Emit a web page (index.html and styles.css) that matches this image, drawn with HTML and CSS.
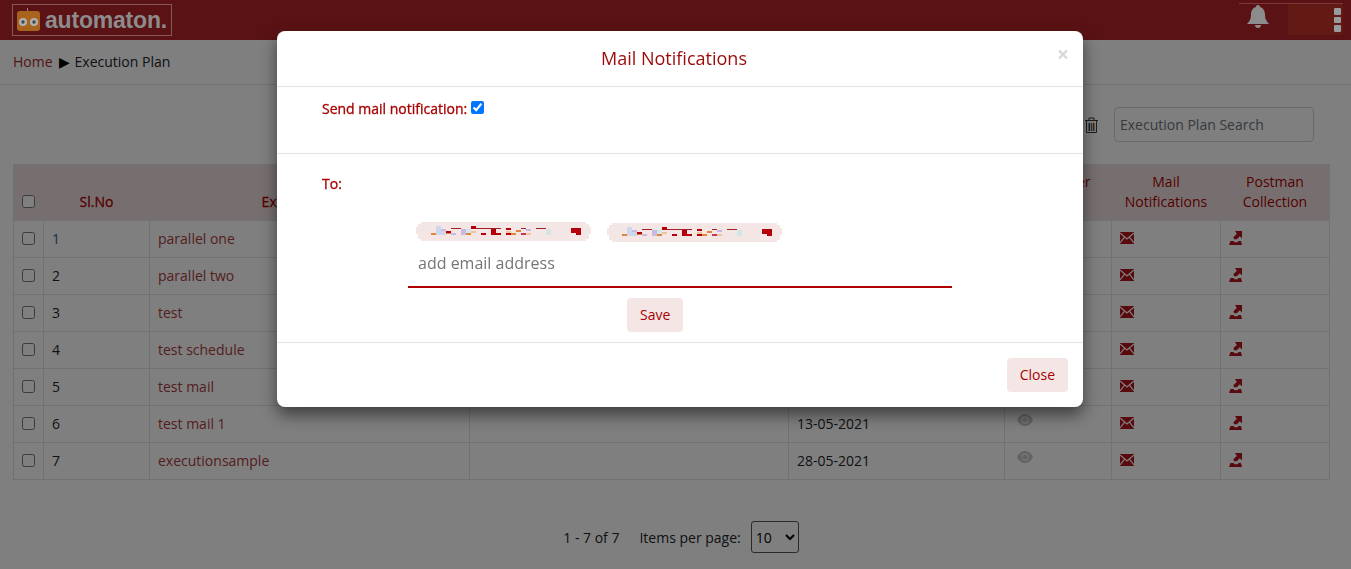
FILE: index.html
```html
<!DOCTYPE html>
<html lang="en">
<head>
  <meta charset="UTF-8" />
  <title>Execution Plan</title>
  <link rel="stylesheet" href="styles.css">
</head>
<body>
  <svg class="defs" width="0" height="0">
    <symbol id="mail" viewBox="0 0 14 12">
      <path fill="#b3141c" d="M0 0h14v12H0z"/>
      <path fill="none" stroke="#fff" stroke-width="1.200" d="M0 1l7 6 7-6M0 11l4.600-5.800M14 11L9.400 5.200"/>
    </symbol>
    <symbol id="export" viewBox="0 0 13 14">
      <path fill="#b3141c" d="M6 0h7v7.500L10.800 5.200 7.800 8.200 5 8.200 4.500 6 7.800 3zM1.500 10h3l1 1.200h3l1-1.200H12l1 4H0z"/>
    </symbol>
    <symbol id="eye" viewBox="0 0 16 12">
      <path fill="#c4c4c4" d="M8 0c3.500 0 6.300 2.500 8 6-1.700 3.500-4.500 6-8 6s-6.300-2.500-8-6c1.700-3.500 4.500-6 8-6z"/>
      <circle cx="8" cy="6" r="3.700" fill="#f4f4f4"/>
      <circle cx="8" cy="6" r="2.600" fill="#c4c4c4"/>
    </symbol>
    <symbol id="blur" viewBox="0 0 175 19">
      <path fill="#f5e6e6" d="M5 0h165v2h3v3h2v7h-2v5h-3v2H5v-2H2v-5H0V5h2V2h3z"/>
      <path fill="#cdd6ea" d="M20 4h5v9h-5zM25 8h5v5h-5z"/>
      <path fill="#e0853a" d="M15 11h5v2h-5zM30 10h5v2h-5zM50 11h5v2h-5zM100 8h5v2h-5zM95 11h5v2h-5z"/>
      <path fill="#c9b8e0" d="M25 7h5v2h-5zM45 7h5v6h-5zM35 11h5v2h-5zM110 7h5v2h-5z"/>
      <path fill="#b5000b" d="M55 4h5v3h-5zM30 9h5v2h-5zM75 7h5v6h-5zM80 11h5v2h-5zM65 11h5v2h-5zM90 6h5v2h-5zM90 11h5v2h-5zM155 6h10v5h-10zM160 11h5v2h-5z"/>
      <path fill="#a0202a" d="M35 6h10v1H35zM60 6h10v1H60zM70 6h15v1H70zM105 6h5v1h-5zM120 6h10v1h-10z"/>
      <path fill="#efc49c" d="M55 9h5v2h-5zM90 9h5v2h-5zM110 11h5v2h-5z"/>
      <path fill="#d3e6e6" d="M50 7h5v4h-5zM130 7h5v6h-5z"/>
      <path fill="#c23a5a" d="M105 11h5v2h-5z"/>
    </symbol>
  </svg>

  <header class="topbar">
    <div class="logo">
      <svg width="24" height="24" viewBox="0 0 24 24">
        <path fill="none" stroke="#a08080" d="M10.500 4V0"/>
        <rect y="3" width="23" height="20" rx="3" fill="#a8641c"/>
        <circle cx="6" cy="14" r="4" fill="#b0b0b0"/>
        <circle cx="17" cy="14" r="4" fill="#b0b0b0"/>
        <circle cx="6" cy="14" r="1.700" fill="#444"/>
        <circle cx="17" cy="14" r="1.700" fill="#444"/>
      </svg>
      <span class="logo-text">automaton.</span>
    </div>
    <div class="top-right">
      <svg class="bell" width="22" height="23" viewBox="0 0 22 23">
        <path fill="#8c8c8c" d="M11 0c1.300 0 2 .8 2 2 3.500 1 5 4 5 8 0 4 1.500 6 4 9H0c2.500-3 4-5 4-9 0-4 1.500-7 5-8 0-1.200.7-2 2-2zM8 20h6c0 2-1.300 3-3 3s-3-1-3-3z"/>
      </svg>
      <div class="user-block">
        <div class="dots"><i></i><i></i><i></i></div>
      </div>
    </div>
  </header>

  <nav class="crumbs">
    <a class="crumb-link">Home</a>
    <span class="crumb-arrow">&#9654;</span>
    <span>Execution Plan</span>
  </nav>

  <main class="content">
    <div class="toolbar">
      <svg class="trash" width="13" height="16" viewBox="0 0 13 16">
        <path fill="none" stroke="#3a3a3a" d="M0 3.500h13M4 3V1h5v2M1.500 4v11.500h10V4"/>
        <path fill="#1d4a6a" d="M3.500 6h1.500v8H3.500z"/>
        <path fill="#6a5a3a" d="M5.800 6h1.500v8H5.800z"/>
        <path fill="#7a4a1a" d="M8 6h1.500v8H8z"/>
      </svg>
      <input class="search" type="text" placeholder="Execution Plan Search">
    </div>

    <table class="plans">
      <colgroup>
        <col class="c-check"><col class="c-no"><col class="c-name"><col class="c-desc">
        <col class="c-date"><col class="c-view"><col class="c-mail"><col class="c-post">
      </colgroup>
      <thead>
        <tr>
          <th class="check-head"><input type="checkbox"></th>
          <th>Sl.No</th>
          <th>Execution Plan</th>
          <th>Description</th>
          <th>Created Date</th>
          <th class="top">Scheduler<br>View</th>
          <th class="top">Mail<br>Notifications</th>
          <th class="top">Postman<br>Collection</th>
        </tr>
      </thead>
      <tbody id="rows"></tbody>
    </table>

    <div class="pager">
      <span>1 - 7 of 7</span>
      <label class="per-page">Items per page:
        <select><option>10</option></select>
      </label>
    </div>
  </main>

  <div class="backdrop"></div>

  <div class="modal">
    <div class="modal-title">
      <h2>Mail Notifications</h2>
      <span class="close-x">&times;</span>
    </div>
    <div class="modal-row send-row">
      <label>Send mail notification:</label>
      <input type="checkbox" checked>
    </div>
    <div class="modal-row to-row">
      <label>To:</label>
      <div class="chips">
        <svg width="175" height="19"><use href="#blur"/></svg>
        <svg class="chip-low" width="175" height="19"><use href="#blur"/></svg>
      </div>
      <input class="email" type="text" placeholder="add email address">
      <button class="btn save" type="button">Save</button>
    </div>
    <div class="modal-foot">
      <button class="btn" type="button">Close</button>
    </div>
  </div>

  <script>
    const plans = ["parallel one", "parallel two", "test", "test schedule", "test mail", "test mail 1", "executionsample"];
    const dates = ["13-05-2021", "13-05-2021", "13-05-2021", "13-05-2021", "13-05-2021", "13-05-2021", "28-05-2021"];
    let html = "";
    plans.forEach(function (name, i) {
      html += `<tr>
        <td><input type="checkbox"></td>
        <td class="${i === 0 ? "num-link" : "num"}">${i + 1}</td>
        <td class="name">${name}</td>
        <td></td>
        <td class="date">${dates[i]}</td>
        <td><svg class="ico-eye" width="16" height="12"><use href="#eye"/></svg></td>
        <td><svg class="ico" width="14" height="12"><use href="#mail"/></svg></td>
        <td><svg class="ico" width="13" height="14"><use href="#export"/></svg></td>
      </tr>`;
    });
    document.getElementById("rows").innerHTML = html;
  </script>
</body>
</html>
```

FILE: styles.css
```css
* {
  box-sizing: border-box;
}

body {
  margin: 0;
  height: 569px;
  overflow: hidden;
  font-family: "Open Sans", sans-serif;
  font-size: 14px;
  color: #212529;
  background: #fff;
}

.defs {
  display: block;
  height: 0;
}

/* header sits over the backdrop, so its colours are the dimmed ones */
.topbar {
  position: relative;
  z-index: 1;
  height: 40px;
  background: #5a1214;
  display: flex;
  justify-content: space-between;
  align-items: flex-start;
  padding: 4px 0 0 12px;
}

.logo {
  width: 160px;
  height: 32px;
  border: 1px solid #85585a;
  display: flex;
  align-items: center;
  gap: 4px;
  padding: 0 0 0 4px;
}

.logo-text {
  font-family: "Liberation Sans", sans-serif;
  font-weight: 700;
  font-size: 23px;
  letter-spacing: -0.2px;
  color: #8c8c8c;
}

.top-right {
  display: flex;
  align-items: flex-start;
  width: 104px;
  height: 33px;
  margin: -1px 8px 0 0;
  border-top: 1px solid #7a3a3a;
}

.bell {
  margin: 1px 0 0 8px;
}

.user-block {
  width: 55px;
  height: 31px;
  margin-left: 19px;
  background: #641a14;
  display: flex;
  justify-content: flex-end;
}

.dots {
  width: 7px;
  margin-right: 2px;
  padding-top: 4px;
  display: flex;
  flex-direction: column;
  gap: 2px;
}

.dots i {
  display: block;
  height: 6.500px;
  background: #9a9a9a;
  border-radius: 1px;
}

.crumbs {
  height: 45px;
  border-bottom: 1px solid #dee2e6;
  padding: 12px 13px 0;
  display: flex;
  gap: 6px;
  line-height: 20px;
}

.crumb-link {
  color: #a5282c;
}

.crumb-arrow {
  font-size: 14px;
  color: #000;
  margin-right: -1px;
}

.content {
  padding: 0 21px 0 13px;
}

.toolbar {
  height: 79px;
  display: flex;
  justify-content: flex-end;
  align-items: flex-start;
  padding: 22px 16px 0 0;
}

.trash {
  margin: 10px 16px 0 0;
}

.search {
  width: 200px;
  height: 35px;
  border: 1px solid #ced4da;
  border-radius: 4px;
  padding: 0 5px;
  font: 14px "Open Sans", sans-serif;
}

.search::placeholder {
  color: #6c757d;
}

.plans {
  width: 1316px;
  table-layout: fixed;
  border-collapse: collapse;
  color: #a83c40;
}

.c-check { width: 30px; }
.c-no { width: 106px; }
.c-name { width: 320px; }
.c-desc { width: 319px; }
.c-date { width: 216px; }
.c-view { width: 107px; }
.c-mail { width: 109px; }
.c-post { width: 109px; }

.plans th,
.plans td {
  border: 1px solid #dee2e6;
  padding: 0 8px;
}

.plans th {
  height: 56px;
  background: #efdfdf;
  font-weight: 500;
  text-align: center;
  vertical-align: bottom;
  line-height: 20px;
  padding-bottom: 8px;
  color: #a80000;
  -webkit-text-stroke: .3px #a80000;
}

.plans th.top {
  font-weight: 400;
  -webkit-text-stroke: 0;
}

.plans th.check-head {
  vertical-align: middle;
  padding-bottom: 0;
  padding-top: 17px;
}

.plans td {
  height: 37px;
  padding-bottom: 2px;
}

.plans input[type="checkbox"] {
  margin: 0;
  width: 13px;
  height: 13px;
  display: block;
}

.num-link {
  color: #3a5a9a;
}

.num {
  color: #212529;
}

.date {
  color: #212529;
}

.ico {
  display: block;
  margin-top: -1px;
}

.ico-eye {
  display: block;
  margin: -6px 0 0 4px;
}

.pager {
  display: flex;
  justify-content: center;
  align-items: center;
  gap: 20px;
  margin-top: 41px;
  padding-left: 19px;
  color: #212529;
}

.per-page {
  display: flex;
  align-items: center;
  gap: 10px;
}

.per-page select {
  width: 48px;
  height: 32px;
  font: 14px "Open Sans", sans-serif;
  background: #fff;
  border: 1px solid #555;
  border-radius: 3px;
}

.backdrop {
  position: fixed;
  inset: 0;
  background: rgba(0, 0, 0, .5);
}

.modal {
  position: fixed;
  z-index: 2;
  left: 277px;
  top: 31px;
  width: 806px;
  background: #fff;
  border-radius: 8px;
  box-shadow: 0 8px 16px rgba(0, 0, 0, .5);
  color: #a80000;
}

.modal-title {
  height: 56px;
  border-bottom: 1px solid #e4e4e4;
  display: flex;
  align-items: center;
  justify-content: center;
  position: relative;
}

.modal-title h2 {
  margin: -2px 0 0 -12px;
  font-size: 18px;
  font-weight: 400;
  color: #9c0a0a;
}

.close-x {
  position: absolute;
  right: 14px;
  top: 10px;
  font-size: 21px;
  font-weight: 700;
  color: #d8d8d8;
  line-height: 26px;
}

.modal-row label {
  font-weight: 500;
  -webkit-text-stroke: .3px #a80000;
}

.send-row {
  height: 67px;
  border-bottom: 1px solid #e4e4e4;
  display: flex;
  align-items: flex-start;
  gap: 4px;
  padding: 12px 0 0 45px;
  line-height: 20px;
}

.send-row input {
  margin: 2px 0 0;
  width: 13px;
  height: 13px;
}

.to-row {
  height: 189px;
  border-bottom: 1px solid #e4e4e4;
  padding: 20px 0 0 45px;
  display: flex;
  flex-direction: column;
  line-height: 20px;
}

.chips {
  display: flex;
  gap: 16px;
  height: 20px;
  margin: 28px 0 0 94px;
}

.chip-low {
  margin-top: 1px;
}

.email {
  width: 544px;
  height: 46px;
  margin: 0 0 10px 86px;
  padding: 0 10px 2px;
  border: 0;
  border-bottom: 2px solid #b00000;
  font: 16px "Open Sans", sans-serif;
  outline: none;
}

.email::placeholder {
  color: #757575;
}

.btn {
  height: 34px;
  padding: 0 13px 2px;
  background: #f5e6e6;
  color: #a80000;
  border: 0;
  border-radius: 4px;
  font: 14px "Open Sans", sans-serif;
}

.save {
  align-self: flex-start;
  margin-left: 305px;
}

.modal-foot {
  height: 64px;
  display: flex;
  justify-content: flex-end;
  padding: 15px 15px 0 0;
}
```
